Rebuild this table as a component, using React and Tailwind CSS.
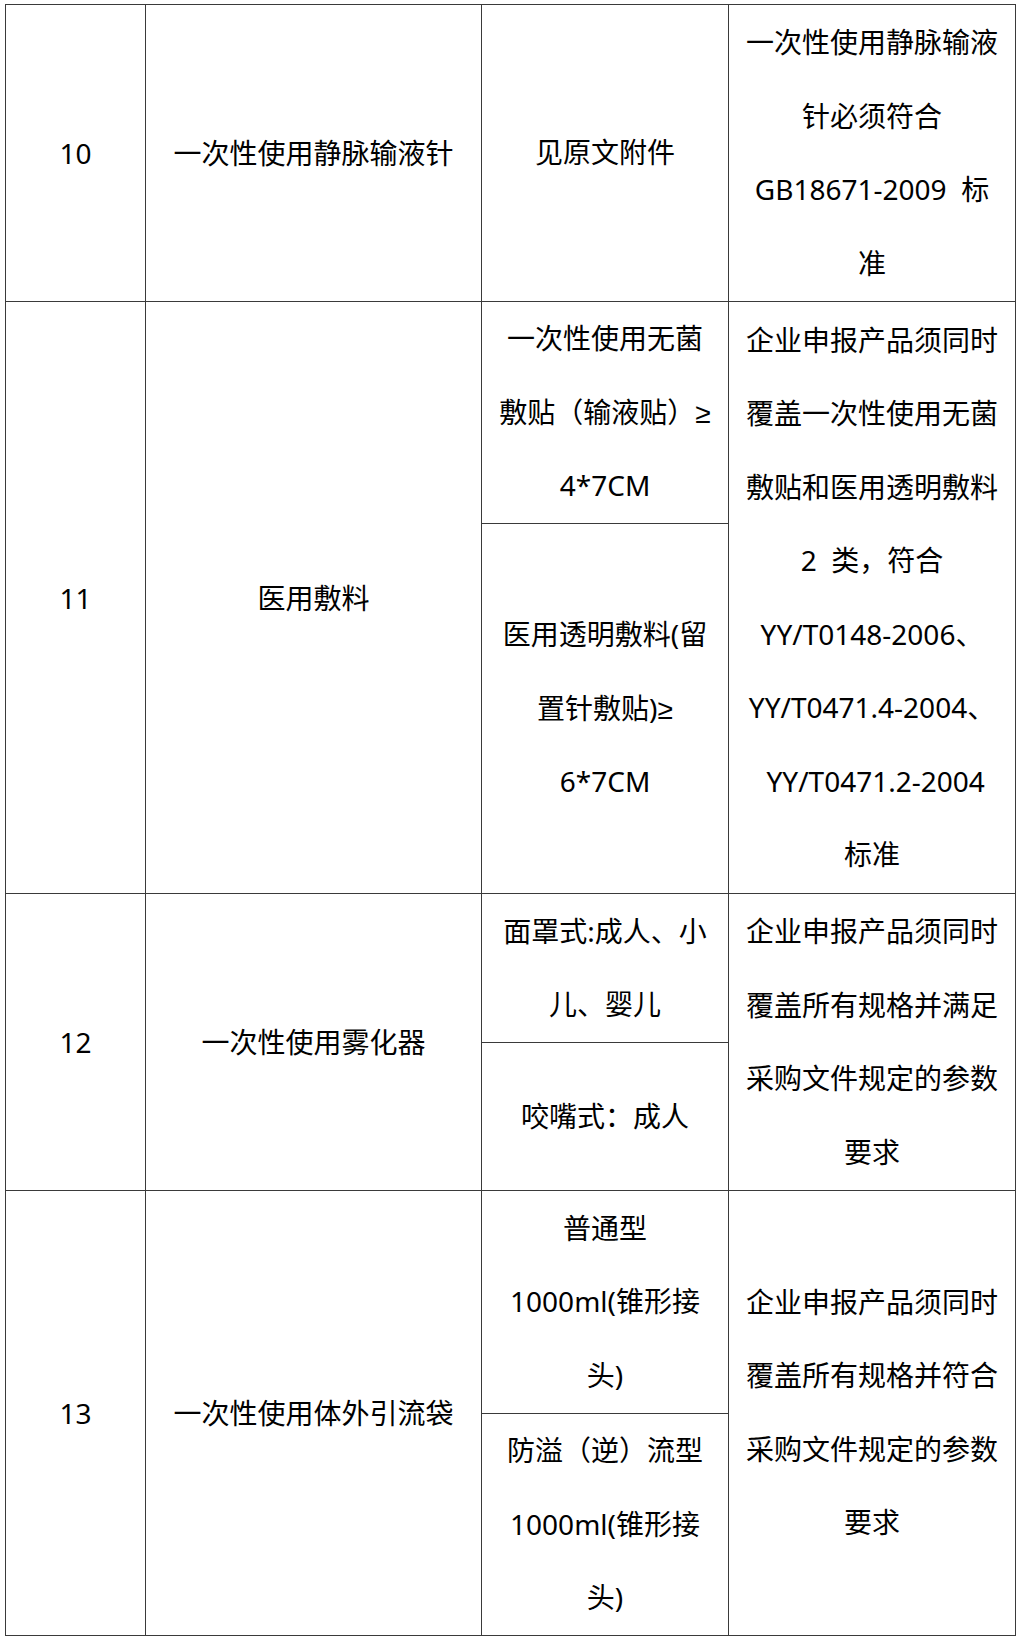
const Ge = () => <span className="leading-none [font-family:'Liberation_Sans',sans-serif]">≥</span>

const rows = [
  {
    no: '10',
    name: '一次性使用静脉输液针',
    specs: [{ h: 'h-[297px]', lines: ['见原文附件'] }],
    req: ['一次性使用静脉输液', '针必须符合', 'GB18671-2009\u00a0\u00a0标', '准'],
  },
  {
    no: '11',
    name: '医用敷料',
    specs: [
      { h: 'h-[222px]', lines: ['一次性使用无菌', <>敷贴（输液贴）<Ge /></>, '4*7CM'] },
      { h: 'h-[370px]', lines: ['医用透明敷料(留', <>置针敷贴)<Ge /></>, '6*7CM'] },
    ],
    req: [
      '企业申报产品须同时',
      '覆盖一次性使用无菌',
      '敷贴和医用透明敷料',
      '2\u00a0\u00a0类，符合',
      'YY/T0148-2006、',
      'YY/T0471.4-2004、',
      '\u00a0YY/T0471.2-2004',
      '标准',
    ],
  },
  {
    no: '12',
    name: '一次性使用雾化器',
    specs: [
      { h: 'h-[149px]', lines: ['面罩式:成人、小', '儿、婴儿'] },
      { h: 'h-[148px]', lines: ['咬嘴式：成人'] },
    ],
    req: ['企业申报产品须同时', '覆盖所有规格并满足', '采购文件规定的参数', '要求'],
  },
  {
    no: '13',
    name: '一次性使用体外引流袋',
    specs: [
      { h: 'h-[223px]', lines: ['普通型', '1000ml(锥形接', '头)'] },
      { h: 'h-[221px]', lines: ['防溢（逆）流型', '1000ml(锥形接', '头)'] },
    ],
    req: ['企业申报产品须同时', '覆盖所有规格并符合', '采购文件规定的参数', '要求'],
  },
]

function Lines({ lines }) {
  return lines.map((l, i) => (
    <div key={i} className="h-[73.5px] overflow-hidden whitespace-nowrap leading-[73.5px]">
      {l}
    </div>
  ))
}

const cell = 'border border-[#3a3a3a] p-0 text-center align-middle'

export default function App() {
  return (
    <div className="min-h-[1638px] bg-white pl-[5px] pt-[4px] text-[28px] text-black [font-family:'Noto_Sans','Noto_Sans_CJK_SC',sans-serif]">
      <table className="w-[1010px] table-fixed border-collapse">
        <colgroup>
          <col className="w-[140px]" />
          <col className="w-[336px]" />
          <col className="w-[247px]" />
          <col className="w-[287px]" />
        </colgroup>
        <tbody>
          {rows.map((r) =>
            r.specs.map((s, i) => (
              <tr key={r.no + i} className={s.h}>
                {i === 0 && (
                  <>
                    <td rowSpan={r.specs.length} className={cell}>
                      {r.no}
                    </td>
                    <td rowSpan={r.specs.length} className={cell}>
                      {r.name}
                    </td>
                  </>
                )}
                <td className={cell}>
                  <Lines lines={s.lines} />
                </td>
                {i === 0 && (
                  <td rowSpan={r.specs.length} className={cell}>
                    <Lines lines={r.req} />
                  </td>
                )}
              </tr>
            ))
          )}
        </tbody>
      </table>
    </div>
  )
}
